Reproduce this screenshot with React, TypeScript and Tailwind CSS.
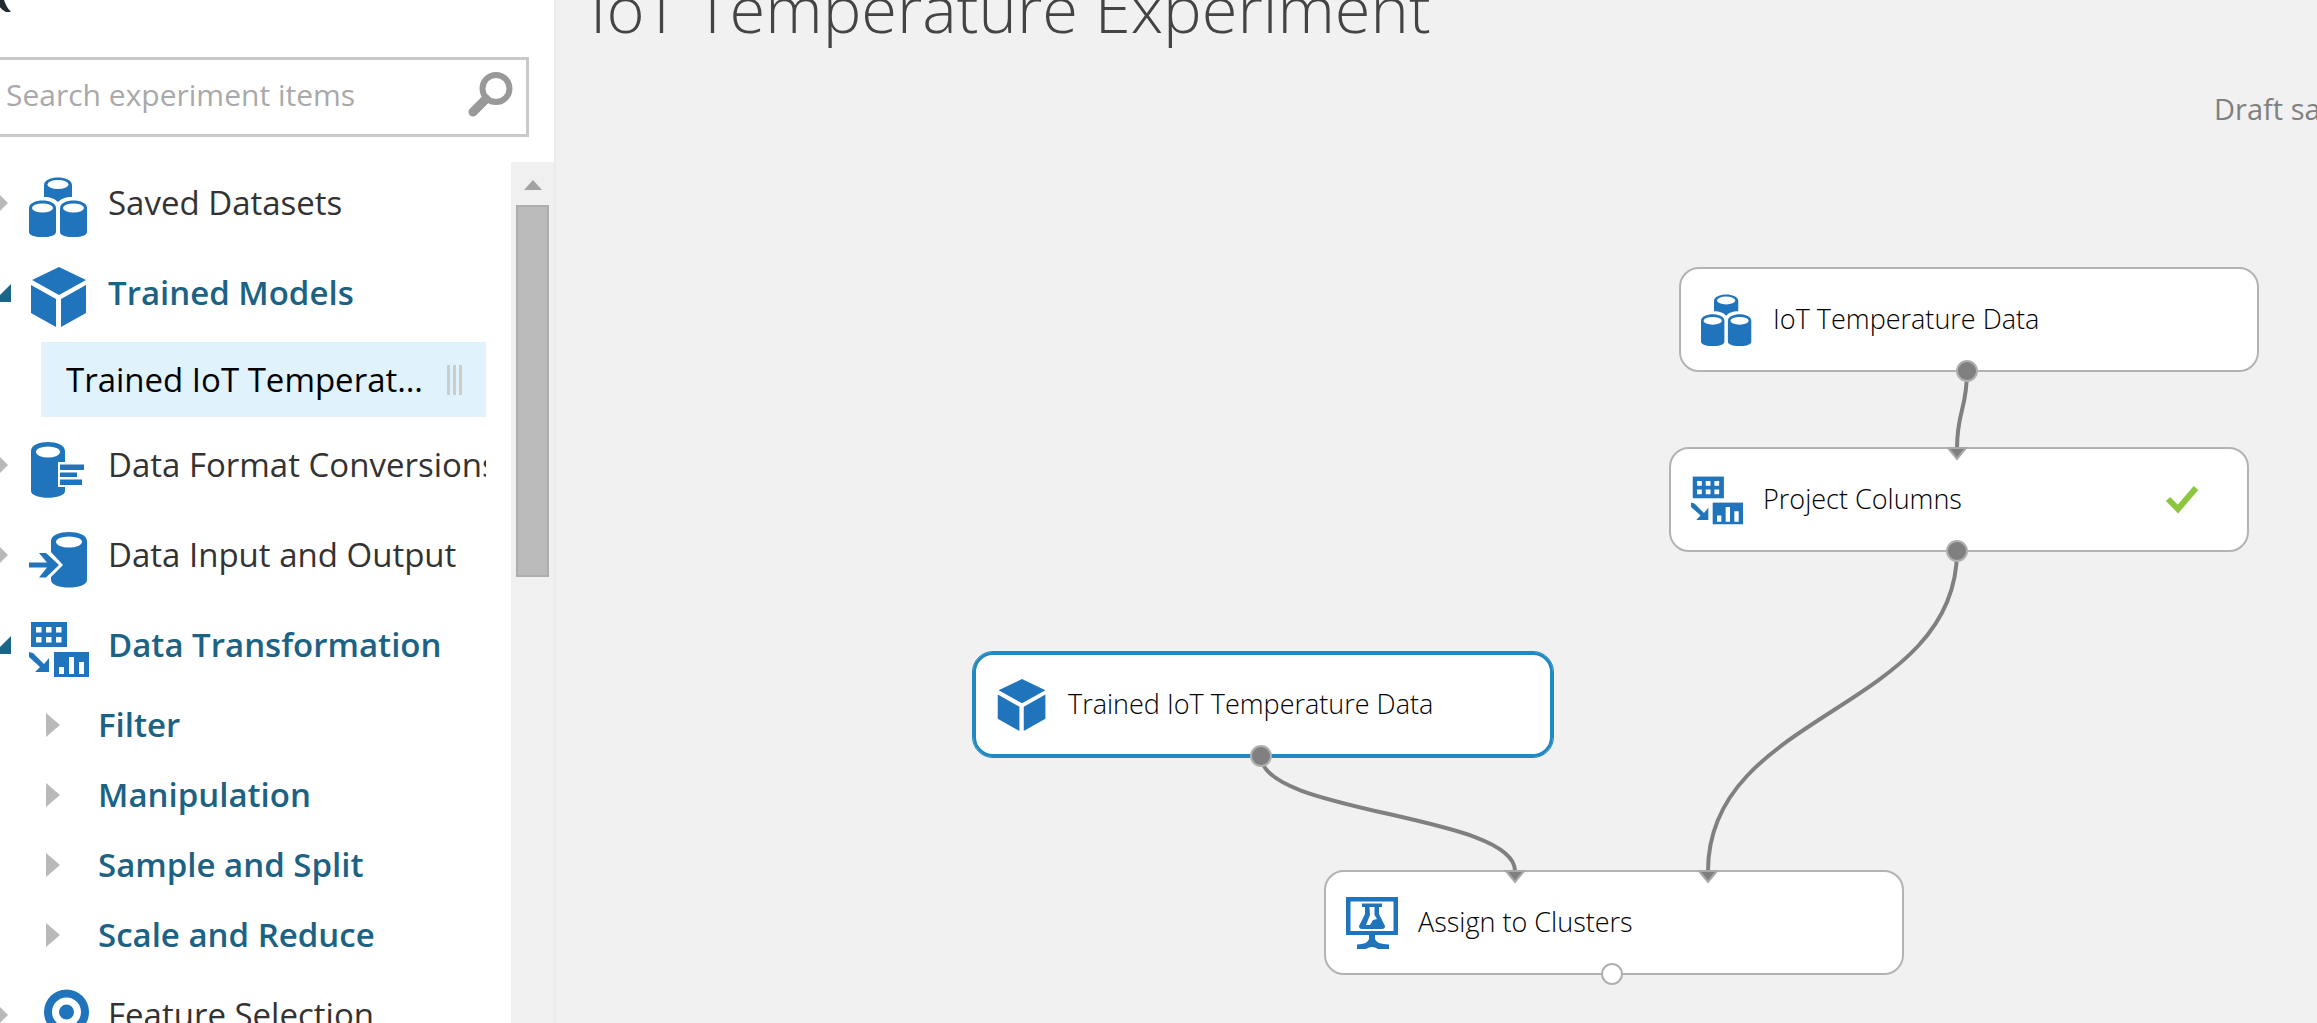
import { ReactNode, useState } from "react";

const BLUE = "#2074bc";

function DatasetsIcon({ className }: { className: string }) {
  const can = (x: number, y: number, w: number, h: number) => (
    <g>
      <path
        d={`M${x} ${y + 8}C${x} ${y - 2} ${x + w} ${y - 2} ${x + w} ${y + 8}V${y + h - 5}C${x + w} ${y + h + 2} ${x} ${y + h + 2} ${x} ${y + h - 5}Z`}
        fill={BLUE}
      />
      <ellipse cx={x + w / 2} cy={y + 8} rx={w / 2 - 3} ry={4.5} fill="#fff" />
    </g>
  );
  return (
    <svg viewBox="0 0 60 60" className={className} aria-hidden="true">
      <path d="M15 8C15 -2 43 -2 43 8V20C36 20 32 22 29 25C26 22 22 20 15 20Z" fill={BLUE} />
      <ellipse cx="29" cy="7.500" rx="10.500" ry="4.500" fill="#fff" />
      {can(0, 23, 27, 37)}
      {can(31, 23, 27, 37)}
    </svg>
  );
}

function CubeIcon({ className }: { className: string }) {
  return (
    <svg viewBox="0 0 60 60" className={className} fill={BLUE} aria-hidden="true">
      <path d="M30 0L57 13L30 28L3 13Z" />
      <path d="M2 18L27 32V60L2 46Z" />
      <path d="M57 18L32 32V60L57 46Z" />
    </svg>
  );
}

function FormatIcon({ className }: { className: string }) {
  return (
    <svg viewBox="0 0 60 60" className={className} fill={BLUE} aria-hidden="true">
      <path d="M2 12C2 0 36 0 36 12V23H29V48H36V52C36 61 2 61 2 52Z" />
      <ellipse cx="19" cy="13" rx="12" ry="5.500" fill="#fff" />
      <path d="M31 25.500H55V31H31ZM31 33.500H48V38H31ZM31 40.500H53V46H31Z" />
    </svg>
  );
}

function InputOutputIcon({ className }: { className: string }) {
  return (
    <svg viewBox="0 0 60 60" className={className} fill={BLUE} aria-hidden="true">
      <path d="M22 12C22 0 58 0 58 12V51C58 61 22 61 22 51V48L34 36L22 23Z" />
      <ellipse cx="40" cy="13" rx="13" ry="5.500" fill="#fff" />
      <path d="M0 33.500H18L10 24H17L30 36L17 48.500H10L18 38.500H0Z" />
    </svg>
  );
}

function TransformIcon({ className }: { className: string }) {
  return (
    <svg viewBox="0 0 60 60" className={className} fill={BLUE} aria-hidden="true">
      <path d="M2 3H38V28H2Z" />
      <path
        fill="#fff"
        d="M7 8h5.500v5.500H7zM17 8h5.500v5.500H17zM27 8h5.500v5.500H27zM7 18h5.500v5.500H7zM17 18h5.500v5.500H17zM27 18h5.500v5.500H27z"
      />
      <path d="M0 33L4 34L15 45L20 39V53H6L11 48L0 38Z" />
      <path d="M25 33H60V58H25Z" />
      <path fill="#fff" d="M30 48h5v7h-5zM40 38h5v17h-5zM50 43h5v12h-5z" />
    </svg>
  );
}

function FeatureIcon({ className }: { className: string }) {
  return (
    <svg viewBox="0 0 60 60" className={className} aria-hidden="true">
      <circle cx="37.500" cy="23" r="18.500" fill="none" stroke={BLUE} strokeWidth="8" />
      <circle cx="37.500" cy="23" r="7.500" fill={BLUE} />
    </svg>
  );
}

function FlaskIcon({ className }: { className: string }) {
  return (
    <svg viewBox="0 0 52 52" className={className} fill={BLUE} aria-hidden="true">
      <path fillRule="evenodd" d="M0 0H52V38H0ZM4.500 4.500V34H47.500V4.500Z" />
      <path d="M16 6.500H36V10H33V17L39 29Q39 32 36 32H16Q13 32 13 29L19 17V10H16Z" />
      <path fill="#fff" d="M23.500 10H28.500V18L31 22L27 23L24 28H20L24 18Z" />
      <path d="M23 38H29V42Q30 47 43 47.500V52H32Q26 48 20 52H11V47.500Q22 47 23 42Z" />
    </svg>
  );
}

function SearchIcon() {
  return (
    <svg viewBox="0 0 46 46" className="size-[46px] shrink-0" fill="none" stroke="#999" aria-hidden="true">
      <circle cx="29" cy="16.500" r="13.500" strokeWidth="6" />
      <path d="M19 27L6 40" strokeWidth="9" strokeLinecap="round" />
    </svg>
  );
}

function Marker({ open }: { open: boolean }) {
  return (
    <svg viewBox="0 0 29 26" className="h-[26px] w-[29px] shrink-0" aria-hidden="true">
      {open ? <path d="M11 4V22H-7Z" fill="#1b6688" /> : <path d="M-5 0L8 13L-5 26Z" fill="#b9b9b9" />}
    </svg>
  );
}

type Category = {
  label: string;
  Icon: (p: { className: string }) => ReactNode;
  open?: boolean;
  item?: string;
  groups?: string[];
};

const categories: Category[] = [
  { label: "Saved Datasets", Icon: DatasetsIcon },
  { label: "Trained Models", Icon: CubeIcon, open: true, item: "Trained IoT Temperature Data" },
  { label: "Data Format Conversions", Icon: FormatIcon },
  { label: "Data Input and Output", Icon: InputOutputIcon },
  {
    label: "Data Transformation",
    Icon: TransformIcon,
    open: true,
    groups: ["Filter", "Manipulation", "Sample and Split", "Scale and Reduce"],
  },
  { label: "Feature Selection", Icon: FeatureIcon },
];

function CategoryRow({ label, Icon, open = false, item, groups }: Category) {
  return (
    <li>
      <button
        type="button"
        aria-expanded={open}
        className="flex h-[90px] w-full items-center overflow-hidden text-left whitespace-nowrap"
      >
        <Marker open={open} />
        <Icon className="mt-2 size-[60px] shrink-0" />
        <span className={open ? "pl-[19px] font-semibold text-[#1b6285]" : "pl-[19px] text-[#333]"}>{label}</span>
      </button>
      {item && (
        <div className="h-[82px] pt-1 pl-[41px]">
          <button
            type="button"
            className="flex h-[75px] w-full items-center justify-between bg-[#e0f2fb] pr-6 pl-[25px] text-left text-black"
          >
            <span className="w-[364px] truncate">{item}</span>
            <span className="flex h-[30px] gap-[3px]">
              <span className="w-[3px] bg-[#ccc]" />
              <span className="w-[3px] bg-[#ccc]" />
              <span className="w-[3px] bg-[#ccc]" />
            </span>
          </button>
        </div>
      )}
      {groups && (
        <ul>
          {groups.map((g) => (
            <li key={g}>
              <button
                type="button"
                className="flex h-[70px] w-full items-center gap-[38px] pl-[46px] text-left font-semibold text-[#1b6285]"
              >
                <svg viewBox="0 0 14 24" className="h-6 w-[14px]" aria-hidden="true">
                  <path d="M0 0L14 12L0 24Z" fill="#b9b9b9" />
                </svg>
                {g}
              </button>
            </li>
          ))}
        </ul>
      )}
    </li>
  );
}

function Sidebar() {
  const [query, setQuery] = useState("");
  return (
    <aside className="flex w-[556px] shrink-0 flex-col border-r-2 border-[#ebebeb] bg-white">
      <button type="button" aria-label="Collapse panel" className="h-[57px] w-12">
        <svg viewBox="0 0 48 57" className="h-[57px] w-12" aria-hidden="true">
          <path d="M-2 -4H3Q5 6 11 12H6Q1 10 -2 4Z" fill="#1f2a33" />
        </svg>
      </button>
      <label className="mr-[25px] flex h-20 items-center border-[3px] border-l-0 border-[#c9c9c9] pr-[13px] pb-1 pl-[6px]">
        <input
          type="text"
          aria-label="Search experiment items"
          placeholder="Search experiment items"
          value={query}
          onChange={(e) => setQuery(e.target.value)}
          className="min-w-0 flex-1 bg-transparent text-[30px] outline-none placeholder:text-[#a9a9a9]"
        />
        <SearchIcon />
      </label>
      <div className="mt-[21px] flex min-h-0 flex-1">
        <nav aria-label="Experiment items" className="min-w-0 flex-1 overflow-hidden pr-[25px]">
          <ul>
            {categories.map((c) => (
              <CategoryRow key={c.label} {...c} />
            ))}
          </ul>
        </nav>
        <div className="mt-1 flex w-[43px] flex-col items-center bg-[#f0f0f0] pt-[18px]">
          <svg viewBox="0 0 18 10" className="h-[10px] w-[18px]" aria-hidden="true">
            <path d="M9 0L18 10H0Z" fill="#a3a3a3" />
          </svg>
          <div className="mt-[15px] h-[372px] w-[33px] border-2 border-[#adadad] bg-[#bbb]" />
        </div>
      </div>
    </aside>
  );
}

function Port({ className, filled = true }: { className: string; filled?: boolean }) {
  return (
    <span
      className={`absolute size-[22px] rounded-full border-2 border-[#b0b0b0] ${filled ? "bg-[#808080]" : "bg-white"} ${className}`}
    />
  );
}

function InPort({ className }: { className: string }) {
  return (
    <svg viewBox="0 0 22 14" className={`absolute h-[14px] w-[22px] ${className}`} aria-hidden="true">
      <path d="M2 1H20L11 12Z" fill="#808080" stroke="#a8a8a8" strokeWidth="2" />
    </svg>
  );
}

function Node({
  label,
  icon,
  className,
  selected = false,
  children,
}: {
  label: string;
  icon: ReactNode;
  className: string;
  selected?: boolean;
  children?: ReactNode;
}) {
  return (
    <div
      className={`absolute flex h-[105px] w-[580px] items-center gap-5 rounded-[20px] bg-white pl-5 text-[27px] font-light text-black ${
        selected ? "border-3 border-[#2288c0] outline outline-[#2288c0]" : "border-2 border-[#b3b3b3]"
      } ${className}`}
    >
      {icon}
      <span className="pb-0.5 whitespace-nowrap">{label}</span>
      {children}
    </div>
  );
}

function Canvas() {
  return (
    <main className="relative min-w-0 flex-1 overflow-hidden bg-[#f1f1f1]">
      <h1 className="absolute -top-[36px] left-[34px] text-[65px] leading-[88px] font-light whitespace-nowrap text-[#444]">
        IoT Temperature Experiment
      </h1>
      <p className="absolute top-[89px] left-[1658px] text-[29px] leading-10 whitespace-nowrap text-[#808080]">
        Draft saved at 3:14:07 PM
      </p>
      <Node
        label="IoT Temperature Data"
        className="top-[267px] left-[1123px]"
        icon={<DatasetsIcon className="size-[52px]" />}
      />
      <Node
        label="Project Columns"
        className="top-[447px] left-[1113px]"
        icon={<TransformIcon className="size-[52px]" />}
      >
        <svg viewBox="0 0 34 28" className="mr-12 ml-auto h-7 w-[34px]" aria-hidden="true">
          <path d="M3 13L13 23L31 2" fill="none" stroke="#8cc63f" strokeWidth="6" />
        </svg>
      </Node>
      <Node
        label="Trained IoT Temperature Data"
        selected
        className="top-[652px] left-[417px]"
        icon={<CubeIcon className="size-[52px]" />}
      />
      <Node
        label="Assign to Clusters"
        className="top-[870px] left-[768px]"
        icon={<FlaskIcon className="size-[52px]" />}
      />
      <svg className="pointer-events-none absolute inset-0 size-full" fill="none" stroke="#808080" strokeWidth="4">
        <path d="M1411 371C1411 410 1401 410 1401 449" />
        <path d="M1401 551C1401 711 1152 711 1152 871" />
        <path d="M705 756C705 814 959 814 959 871" />
      </svg>
      <Port className="top-[360px] left-[1400px]" />
      <Port className="top-[540px] left-[1390px]" />
      <Port className="top-[745px] left-[694px]" />
      <Port filled={false} className="top-[963px] left-[1045px]" />
      <InPort className="top-[447px] left-[1390px]" />
      <InPort className="top-[870px] left-[948px]" />
      <InPort className="top-[870px] left-[1141px]" />
    </main>
  );
}

export default function App() {
  return (
    <div className="flex h-screen overflow-hidden bg-[#f1f1f1] font-['Open_Sans','Noto_Sans',sans-serif] text-[33px] leading-[48px]">
      <Sidebar />
      <Canvas />
    </div>
  );
}
